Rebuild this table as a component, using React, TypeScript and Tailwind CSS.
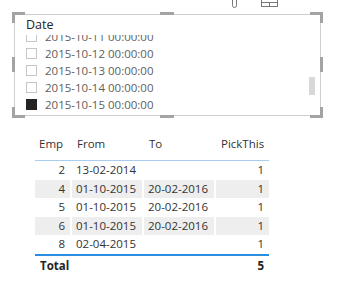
const dates = [
  "2015-10-11 00:00:00",
  "2015-10-12 00:00:00",
  "2015-10-13 00:00:00",
  "2015-10-14 00:00:00",
  "2015-10-15 00:00:00",
];

const rows = [
  { emp: 2, from: "13-02-2014", to: "", pick: 1 },
  { emp: 4, from: "01-10-2015", to: "20-02-2016", pick: 1 },
  { emp: 5, from: "01-10-2015", to: "20-02-2016", pick: 1 },
  { emp: 6, from: "01-10-2015", to: "20-02-2016", pick: 1 },
  { emp: 8, from: "02-04-2015", to: "", pick: 1 },
];

function Handles() {
  return (
    <>
      <div className="absolute -left-[3px] -top-[3px] w-[13px] h-[11px] border-l-[3px] border-t-[3px] border-[#a3a3a3]" />
      <div className="absolute -right-[3px] -top-[3px] w-[13px] h-[11px] border-r-[3px] border-t-[3px] border-[#a3a3a3]" />
      <div className="absolute -left-[3px] -bottom-[3px] w-[13px] h-[11px] border-l-[3px] border-b-[3px] border-[#a3a3a3]" />
      <div className="absolute -right-[3px] -bottom-[3px] w-[13px] h-[11px] border-r-[3px] border-b-[3px] border-[#a3a3a3]" />
      <div className="absolute left-[145px] -top-[3px] w-[14px] h-[3px] bg-[#a3a3a3]" />
      <div className="absolute left-[145px] -bottom-[3px] w-[14px] h-[3px] bg-[#a3a3a3]" />
      <div className="absolute -left-[3px] top-[42px] w-[3px] h-[15px] bg-[#a3a3a3]" />
      <div className="absolute -right-[3px] top-[42px] w-[3px] h-[15px] bg-[#a3a3a3]" />
    </>
  );
}

export default function App() {
  return (
    <div className="relative w-[353px] h-[286px] bg-white overflow-hidden font-['Open_Sans',sans-serif]">
      {/* visual header toolbar, cut off by the top edge */}
      <svg className="absolute left-[231px] top-0" width="7" height="8" viewBox="0 0 7 8">
        <path d="M1.5 -2 V5.5 Q1.5 7.5 3.5 7.5 Q5.5 7.5 5.5 5.5 V-2" fill="none" stroke="#777" strokeWidth="1" />
      </svg>
      <svg className="absolute left-[260px] top-0" width="19" height="7" viewBox="0 0 19 7">
        <rect x="1.5" y="-3" width="16" height="9.5" fill="none" stroke="#777" strokeWidth="1" />
        <path d="M1.5 2.5 H17.5 M9.5 2.5 V6.5" stroke="#777" strokeWidth="1" />
      </svg>

      <div className="pt-[14px] pl-[14px]">
        <div className="relative w-[307px] h-[102px] border border-[#cfcfcf]">
          <div className="h-[20px] pl-[11px] pt-[2px] text-[12.5px] leading-[16px] text-[#252423]">Date</div>
          <div className="h-[79px] overflow-hidden">
            <div className="-mt-[7px]">
              {dates.map((d, i) => (
                <div key={d} className="h-[17px] flex items-center pl-[11px] gap-[8px]">
                  <span
                    className={
                      i === 4
                        ? "w-[11px] h-[11px] bg-[#252423]"
                        : "w-[11px] h-[11px] border border-[#c8c6c4] bg-white"
                    }
                  />
                  <span className="text-[11.5px] leading-[16px] text-[#605e5c]">{d}</span>
                </div>
              ))}
            </div>
          </div>
          <div className="absolute right-[5px] top-[62px] w-[6px] h-[18px] bg-[#d8d8d8]" />
          <Handles />
        </div>
      </div>

      <div className="ml-[35px] mt-[18px] w-[234px] text-[11.5px] leading-[16px] text-[#333]">
        <div className="h-[27px] flex items-end pb-[8px] border-b border-[#a8cdee]">
          <div className="w-[37px] pl-[4px]">Emp</div>
          <div className="w-[72px] pl-[5px]">From</div>
          <div className="w-[72px] pl-[5px]">To</div>
          <div className="w-[53px] pl-[5px]">PickThis</div>
        </div>
        {rows.map((r, i) => (
          <div key={i} className={i % 2 === 1 ? "h-[18.5px] flex items-center bg-[#eeeeee]" : "h-[18.5px] flex items-center"}>
            <div className="w-[37px] h-full flex items-center justify-end pr-[5px] border-r-2 border-white">{r.emp}</div>
            <div className="w-[72px] h-full flex items-center pl-[4px] border-r-2 border-white">{r.from}</div>
            <div className="w-[72px] h-full flex items-center pl-[4px] border-r-2 border-white">{r.to}</div>
            <div className="w-[53px] h-full flex items-center justify-end pr-[5px]">{r.pick}</div>
          </div>
        ))}
        <div className="h-[22px] flex items-center border-t-2 border-[#2b8de0] font-bold text-[#252423]">
          <div className="flex-1 pl-[5px]">Total</div>
          <div className="pr-[5px]">5</div>
        </div>
      </div>
    </div>
  );
}
